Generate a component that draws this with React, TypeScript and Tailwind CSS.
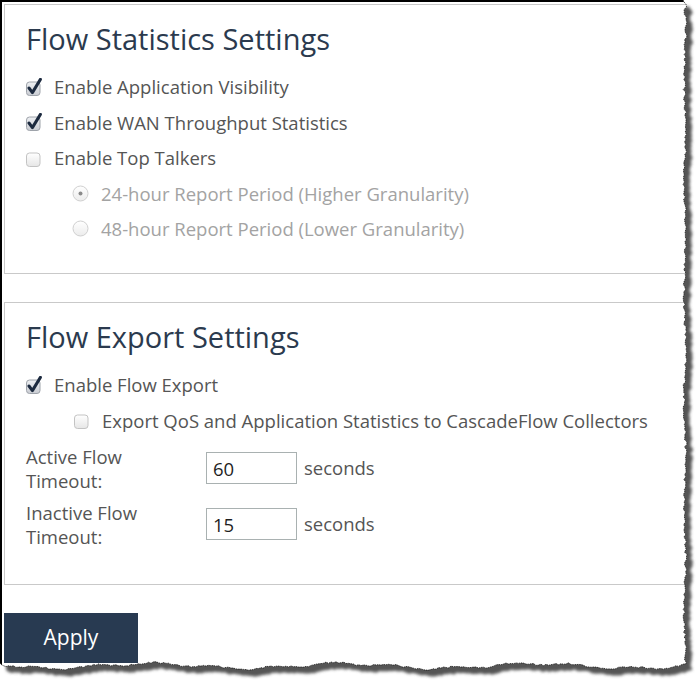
import React from "react";

function makeRng(seed: number) {
  let s = seed;
  return () => {
    s = (s * 16807) % 2147483647;
    return (s - 1) / 2147483646;
  };
}

function paperPoints() {
  const r = makeRng(12345);
  const pts: [number, number][] = [];
  pts.push([0, 0]);
  pts.push([683, 0]);
  for (let y = 2; y <= 664; y += 2.5) {
    const x = 685 + Math.sin(y / 17) * 0.8 + (r() - 0.5) * 2.6;
    pts.push([x, y]);
  }
  for (let x = 686; x >= 0; x -= 2.5) {
    const y =
      666 +
      Math.sin(x / 31) * 2.4 +
      Math.sin(x / 9.5 + 1) * 1.3 +
      (r() - 0.5) * 1.8 -
      (x < 30 ? (30 - x) * 0.08 : 0);
    pts.push([x, y]);
  }
  pts.push([0, 663]);
  return pts;
}

const PTS = paperPoints();
const POLY = PTS.map((p) => `${p[0].toFixed(1)},${p[1].toFixed(1)}`).join(" ");
const EDGE = PTS.slice(1)
  .map((p) => `${p[0].toFixed(1)},${p[1].toFixed(1)}`)
  .join(" ");

function Checkbox({ checked }: { checked: boolean }) {
  return (
    <svg width="17" height="18" viewBox="0 0 17 18" className="block">
      <defs>
        <linearGradient id={checked ? "cbg1" : "cbg0"} x1="0" y1="0" x2="0" y2="1">
          <stop offset="0" stopColor={checked ? "#eef0f3" : "#ffffff"} />
          <stop offset="1" stopColor={checked ? "#c9ccd2" : "#e6e6e6"} />
        </linearGradient>
      </defs>
      <rect
        x="0.5"
        y="4"
        width="13.5"
        height="13.5"
        rx="3"
        fill={checked ? "url(#cbg1)" : "url(#cbg0)"}
        stroke={checked ? "#9ea3aa" : "#c3c3c3"}
      />
      {checked && (
        <path
          d="M3 10 L6.4 14.6 L14.4 1.4"
          stroke="#1c2a3f"
          strokeWidth="3"
          fill="none"
          strokeLinejoin="round"
          strokeLinecap="round"
        />
      )}
    </svg>
  );
}

function Radio({ selected }: { selected: boolean }) {
  return (
    <svg width="17" height="17" viewBox="0 0 17 17" className="block">
      <defs>
        <linearGradient id="rg" x1="0" y1="0" x2="0" y2="1">
          <stop offset="0" stopColor="#ffffff" />
          <stop offset="1" stopColor="#ececec" />
        </linearGradient>
      </defs>
      <circle cx="8.5" cy="8.5" r="7.5" fill="url(#rg)" stroke="#d0d0d0" />
      {selected && <circle cx="8.5" cy="8.5" r="2" fill="#8a8a8a" />}
    </svg>
  );
}

function CheckRow({ checked, label, indent }: { checked: boolean; label: string; indent?: boolean }) {
  return (
    <div className={`flex h-[35.5px] items-center leading-[35.5px] ${indent ? "pl-[48px]" : ""}`}>
      <div className="w-[28px]">
        <Checkbox checked={checked} />
      </div>
      <span className="text-[#555555]">{label}</span>
    </div>
  );
}

function RadioRow({ selected, label }: { selected: boolean; label: string }) {
  return (
    <div className="flex h-[35.5px] items-center pl-[46px] leading-[35.5px]">
      <div className="w-[29px]">
        <Radio selected={selected} />
      </div>
      <span className="text-[#a3a3a3]">{label}</span>
    </div>
  );
}

function TimeoutRow({ label1, label2, value }: { label1: string; label2: string; value: string }) {
  return (
    <div className="flex h-[56px] items-start">
      <div className="w-[180px] text-[18.5px] leading-[24px] text-[#555555]">
        <div>{label1}</div>
        <div>{label2}</div>
      </div>
      <input
        defaultValue={value}
        readOnly
        className="mt-[7.5px] h-[32px] w-[91px] border border-[#a9b1b1] bg-white pl-[6px] text-[18.5px] text-[#1f1f1f] outline-none"
      />
      <span className="ml-[7px] mt-[7.5px] text-[18.5px] leading-[32px] text-[#555555]">seconds</span>
    </div>
  );
}

export default function App() {
  return (
    <div className="relative h-[684px] w-[696px] overflow-hidden bg-white font-['Open_Sans',sans-serif]">
      <div className="h-full w-full border-l-2 border-t-2 border-black pl-[2px] pt-[2px]">
        {/* Panel 1 */}
        <div className="h-[270px] w-[760px] border border-[#c9c9c9] pl-[21px] pt-[15px] text-[18.5px]">
          <h2 className="h-[38px] text-[29px] leading-[38px] text-[#2b3a4e]">Flow Statistics Settings</h2>
          <div className="mt-[11px]">
            <CheckRow checked label="Enable Application Visibility" />
            <CheckRow checked label="Enable WAN Throughput Statistics" />
            <CheckRow checked={false} label="Enable Top Talkers" />
            <RadioRow selected label="24-hour Report Period (Higher Granularity)" />
            <RadioRow selected={false} label="48-hour Report Period (Lower Granularity)" />
          </div>
        </div>

        {/* Panel 2 */}
        <div className="mt-[28px] h-[283px] w-[760px] border border-[#c9c9c9] pl-[21px] pt-[15px] text-[18.5px]">
          <h2 className="h-[38px] text-[29px] leading-[38px] text-[#2b3a4e]">Flow Export Settings</h2>
          <div className="mt-[11px]">
            <CheckRow checked label="Enable Flow Export" />
            <CheckRow
              checked={false}
              indent
              label="Export QoS and Application Statistics to CascadeFlow Collectors"
            />
          </div>
          <div className="mt-[6.5px]">
            <TimeoutRow label1="Active Flow" label2="Timeout:" value="60" />
            <TimeoutRow label1="Inactive Flow" label2="Timeout:" value="15" />
          </div>
        </div>

        <button className="mt-[28px] flex h-[50px] w-[134px] items-center justify-center bg-[#283a51] text-[21px] text-white">
          Apply
        </button>
      </div>

      {/* torn paper edge overlay */}
      <svg
        className="pointer-events-none absolute left-0 top-0"
        width="696"
        height="684"
        viewBox="0 0 696 684"
      >
        <defs>
          <mask id="outside">
            <rect x="0" y="0" width="696" height="684" fill="white" />
            <polygon points={POLY} fill="black" />
          </mask>
          <filter id="blur" x="-5%" y="-5%" width="110%" height="110%">
            <feGaussianBlur stdDeviation="1.5" />
          </filter>
        </defs>
        <rect x="0" y="0" width="696" height="684" fill="white" mask="url(#outside)" />
        <g mask="url(#outside)">
          <polygon points={POLY} fill="#555555" transform="translate(6 6.5)" filter="url(#blur)" />
        </g>
        <polyline points={EDGE} fill="none" stroke="#1a1a1a" strokeWidth="0.8" strokeDasharray="1.5 0.8" />
      </svg>
    </div>
  );
}
